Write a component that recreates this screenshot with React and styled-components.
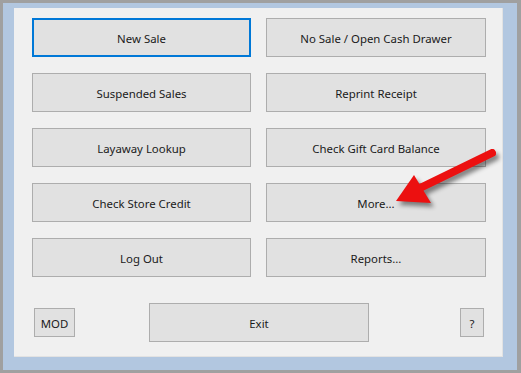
import styled, { createGlobalStyle } from "styled-components";

const GlobalStyle = createGlobalStyle`
    html, body {
        margin: 0;
        padding: 0;
        background: #a0a0a0;
    }
`;

const Page = styled.div`
    position: relative;
    width: 521px;
    height: 373px;
    box-sizing: border-box;
    padding: 3px 4px 3px 3px;
    font-family: "Noto Sans", "Open Sans", sans-serif;
`;

const Frame = styled.div`
    height: 100%;
    box-sizing: border-box;
    background: #b2c7e0;
    padding: 5px 14px 13px 11px;
`;

const Panel = styled.div`
    height: 100%;
    box-sizing: border-box;
    background: #f0f0f0;
    border-right: 1px solid #e2e2e2;
    border-bottom: 1px solid #e2e2e2;
    padding: 10px 0 0 18px;
    display: flex;
    flex-direction: column;
`;

const Grid = styled.div`
    display: grid;
    grid-template-columns: 219px 220px;
    grid-auto-rows: 39px;
    column-gap: 15px;
    row-gap: 16px;
`;

const Button = styled.button`
    box-sizing: border-box;
    width: ${(p) => p.$w || "100%"};
    height: ${(p) => p.$h || "39px"};
    margin-left: ${(p) => p.$ml || "0"};
    padding: 2px 0 0;
    background: #e1e1e1;
    border: ${(p) => (p.$focused ? "2px solid #0078d7" : "1px solid #adadad")};
    border-radius: 0;
    color: #1a1a1a;
    font-family: inherit;
    font-size: 11.4px;
    cursor: default;
`;

const BottomRow = styled.div`
    display: flex;
    align-items: center;
    margin-top: 26px;
    padding-left: 2px;
`;

const Arrow = styled.svg`
    position: absolute;
    left: 0;
    top: 0;
    pointer-events: none;
    filter: drop-shadow(3px 4px 2px rgba(0, 0, 0, 0.45));
`;

const items = [
    ["New Sale", true],
    ["No Sale / Open Cash Drawer"],
    ["Suspended Sales"],
    ["Reprint Receipt"],
    ["Layaway Lookup"],
    ["Check Gift Card Balance"],
    ["Check Store Credit"],
    ["More..."],
    ["Log Out"],
    ["Reports..."],
];

export default function App() {
    return (
        <>
            <GlobalStyle />
            <Page>
                <Frame>
                    <Panel>
                        <Grid>
                            {items.map(([label, focused]) => (
                                <Button key={label} $focused={focused}>{label}</Button>
                            ))}
                        </Grid>
                        <BottomRow>
                            <Button $w="41px" $h="29px">MOD</Button>
                            <Button $w="220px" $ml="74px">Exit</Button>
                            <Button $w="24px" $h="29px" $ml="91px">?</Button>
                        </BottomRow>
                    </Panel>
                </Frame>
                <Arrow width="521" height="373" viewBox="0 0 521 373">
                    <line x1="492" y1="153" x2="418" y2="189" stroke="#ec1010" strokeWidth="8" strokeLinecap="round" />
                    <polygon points="396,201 414,175 431,203" fill="#ec1010" />
                </Arrow>
            </Page>
        </>
    );
}
